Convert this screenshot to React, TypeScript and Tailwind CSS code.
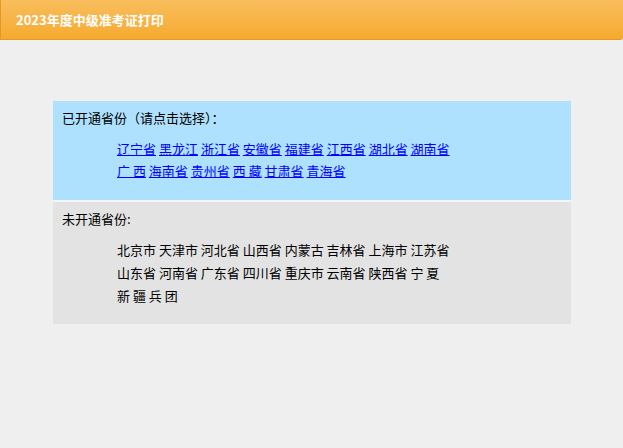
import React from "react";

const opened = ["辽宁省", "黑龙江", "浙江省", "安徽省", "福建省", "江西省", "湖北省", "湖南省", "广 西", "海南省", "贵州省", "西 藏", "甘肃省", "青海省"];
const closed = [
  "北京市 天津市 河北省 山西省 内蒙古 吉林省 上海市 江苏省",
  "山东省 河南省 广东省 四川省 重庆市 云南省 陕西省 宁 夏",
  "新 疆 兵 团",
];

export default function App() {
  return (
    <div
      className="min-h-[448px] bg-[#efefef] text-[13px] text-black"
      style={{ fontFamily: '"Noto Sans CJK SC", "Liberation Sans", sans-serif' }}
    >
      {/* Header */}
      <div className="h-[40px] flex items-center pl-[15px] bg-gradient-to-b from-[#f9be5c] to-[#f5aa2c] border-b border-l border-[#e39a24] rounded-br-[3px]">
        <span className="text-white font-bold text-[13px]">2023年度中级准考证打印</span>
      </div>

      <div className="mx-[53px] mt-[61px] w-[518px]">
        {/* Opened */}
        <div className="bg-[#aee1fd] pl-[9px] pt-[6px] h-[99px]">
          <div className="leading-[22px]">已开通省份（请点击选择）：</div>
          <div className="pl-[55px] mt-[9px] w-[400px] leading-[22px]">
            {opened.map((p, i) => (
              <React.Fragment key={p}>
                <a href="#" className="text-[#0000ff] underline">{p}</a>
                {i < opened.length - 1 ? " " : ""}
              </React.Fragment>
            ))}
          </div>
        </div>
        <div className="h-[2px] bg-[#f2f6f8]" />
        {/* Closed */}
        <div className="bg-[#e3e3e3] pl-[9px] pt-[6px] h-[122px]">
          <div className="leading-[22px]">未开通省份:</div>
          <div className="pl-[55px] mt-[8px] leading-[23px]">
            {closed.map((l) => (
              <div key={l}>{l}</div>
            ))}
          </div>
        </div>
      </div>
    </div>
  );
}
